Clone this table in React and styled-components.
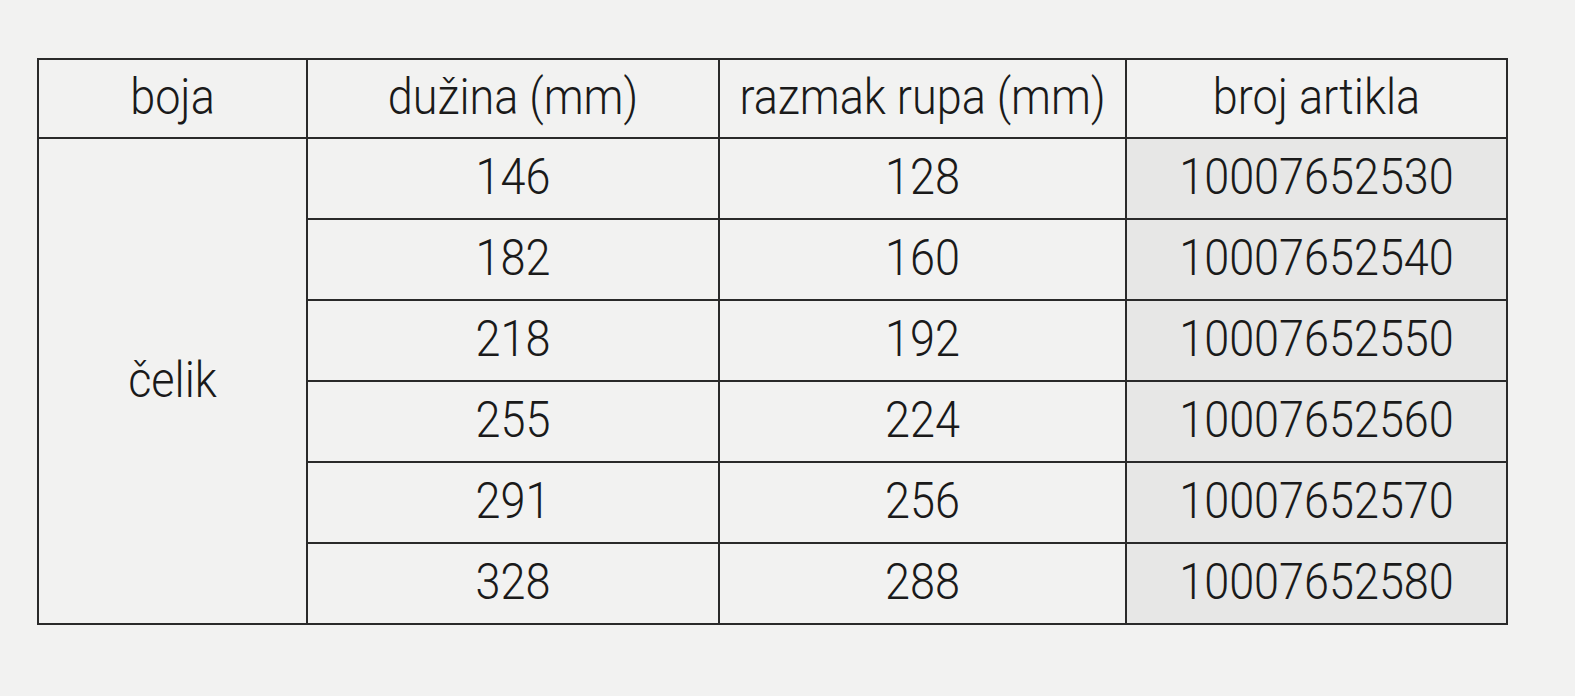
import React from 'react';
import styled, { createGlobalStyle } from 'styled-components';

const Global = createGlobalStyle`
  html, body {
    margin: 0;
    padding: 0;
    background: #f2f2f1;
  }
`;

const Page = styled.div`
  width: 1575px;
  height: 696px;
  box-sizing: border-box;
  padding: 58px 0 0 37px;
  background: #f2f2f1;
  font-family: Roboto, "Liberation Sans", Arial, sans-serif;
  font-weight: 300;
  color: #1a1a1a;
`;

const Table = styled.table`
  border-collapse: collapse;
  table-layout: fixed;
  width: 1469px;
`;

const Cell = styled.td`
  border: 2px solid #2a2a2a;
  text-align: center;
  vertical-align: middle;
  padding: 0 0 4px;
  box-sizing: border-box;
  height: ${p => (p.head ? 79 : 81)}px;
  font-size: 45px;
  font-weight: 300;
  background: ${p => (p.shaded ? '#e7e7e6' : 'transparent')};
`;

const Text = styled.span`
  display: inline-block;
  transform: scaleY(1.1);
`;

const rows = [
  ['146', '128', '10007652530'],
  ['182', '160', '10007652540'],
  ['218', '192', '10007652550'],
  ['255', '224', '10007652560'],
  ['291', '256', '10007652570'],
  ['328', '288', '10007652580'],
];

export default function App() {
  return (
    <Page>
      <Global />
      <Table>
        <colgroup>
          <col style={{ width: 269 }} />
          <col style={{ width: 412 }} />
          <col style={{ width: 407 }} />
          <col style={{ width: 381 }} />
        </colgroup>
        <thead>
          <tr>
            <Cell as="th" head><Text>boja</Text></Cell>
            <Cell as="th" head><Text>dužina (mm)</Text></Cell>
            <Cell as="th" head><Text>razmak rupa (mm)</Text></Cell>
            <Cell as="th" head><Text>broj artikla</Text></Cell>
          </tr>
        </thead>
        <tbody>
          {rows.map((r, i) => (
            <tr key={r[2]}>
              {i === 0 && (
                <Cell rowSpan={rows.length}><Text>čelik</Text></Cell>
              )}
              <Cell><Text>{r[0]}</Text></Cell>
              <Cell><Text>{r[1]}</Text></Cell>
              <Cell shaded><Text>{r[2]}</Text></Cell>
            </tr>
          ))}
        </tbody>
      </Table>
    </Page>
  );
}
